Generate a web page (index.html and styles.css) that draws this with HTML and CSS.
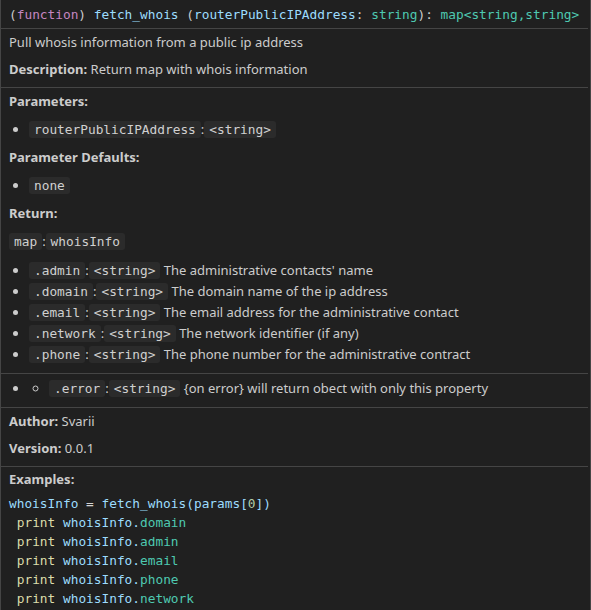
FILE: index.html
```html
<!DOCTYPE html>
<html>
<head>
<meta charset="utf-8">
<link rel="stylesheet" href="styles.css">
</head>
<body>
<div class="hover">
  <div class="content">
    <div class="row header"><span class="p">(</span><span class="kw">function</span><span class="p">)</span> <span class="var">fetch_whois</span> <span class="p">(</span><span class="var">routerPublicIPAddress</span><span class="p">:</span> <span class="type">string</span><span class="p">):</span> <span class="type">map&lt;string,string&gt;</span></div>

    <div class="row">
      <p>Pull whosis information from a public ip address</p>
      <p><strong>Description:</strong> Return map with whois information</p>
    </div>

    <div class="row">
      <p><strong>Parameters:</strong></p>
      <ul>
        <li><code>routerPublicIPAddress</code>:<code>&lt;string&gt;</code></li>
      </ul>
      <p><strong>Parameter Defaults:</strong></p>
      <ul>
        <li><code>none</code></li>
      </ul>
      <p><strong>Return:</strong></p>
      <p class="codeline"><code>map</code>:<code>whoisInfo</code></p>
      <ul>
        <li><code>.admin</code>:<code>&lt;string&gt;</code> The administrative contacts' name</li>
        <li><code>.domain</code>:<code>&lt;string&gt;</code> The domain name of the ip address</li>
        <li><code>.email</code>:<code>&lt;string&gt;</code> The email address for the administrative contact</li>
        <li><code>.network</code>:<code>&lt;string&gt;</code> The network identifier (if any)</li>
        <li><code>.phone</code>:<code>&lt;string&gt;</code> The phone number for the administrative contract</li>
      </ul>
    </div>

    <div class="row">
      <ul>
        <li><ul class="nested"><li><code>.error</code>:<code>&lt;string&gt;</code> {on error} will return obect with only this property</li></ul></li>
      </ul>
    </div>

    <div class="row">
      <p><strong>Author:</strong> Svarii</p>
      <p><strong>Version:</strong> 0.0.1</p>
    </div>

    <div class="row examples">
      <p class="label"><strong>Examples:</strong></p>
<pre class="example"><span class="var">whoisInfo</span> = <span class="var">fetch_whois(params[</span><span class="num">0</span><span class="var">])</span>
 <span class="fn">print</span> <span class="var">whoisInfo.</span><span class="type">domain</span>
 <span class="fn">print</span> <span class="var">whoisInfo.</span><span class="type">admin</span>
 <span class="fn">print</span> <span class="var">whoisInfo.</span><span class="type">email</span>
 <span class="fn">print</span> <span class="var">whoisInfo.</span><span class="type">phone</span>
 <span class="fn">print</span> <span class="var">whoisInfo.</span><span class="type">network</span></pre>
    </div>
  </div>
</div>
</body>
</html>
```
FILE: styles.css
```css
html, body {
  margin: 0;
  padding: 0;
  background: #202020;
}

.hover {
  box-sizing: border-box;
  width: 591px;
  min-height: 610px;
  background: #202020;
  border-left: 1px solid #454545;
  border-right: 1px solid #454545;
  color: #cccccc;
  font-family: "Noto Sans", "Open Sans", sans-serif;
  font-size: 13px;
  line-height: 19px;
}

.content {
  margin-right: 2px;
}

.row {
  padding: 4px 8px 8px 8px;
  border-top: 1px solid #454545;
}

.row:first-child {
  border-top: none;
}

.header {
  padding: 5px 8px 4px 8px;
  font-family: "DejaVu Sans Mono", "Liberation Mono", monospace;
  font-size: 12.8px;
  line-height: 19px;
  white-space: pre;
  color: #cccccc;
}

p {
  margin: 8px 0;
}

.row > :first-child {
  margin-top: 0;
}

.row > :last-child {
  margin-bottom: 0;
}

strong {
  font-weight: 700;
}

ul {
  margin: 8px 0;
  padding-left: 20px;
}

li {
  line-height: 21px;
}

ul.nested {
  margin: 0;
  padding-left: 20px;
  list-style-type: circle;
}

.codeline {
  line-height: 21px;
}

code {
  font-family: "DejaVu Sans Mono", "Liberation Mono", monospace;
  font-size: 12.8px;
  color: #d0d0d0;
  background: #2b2b2b;
  border-radius: 3px;
  padding: 1px 5px;
}

.examples {
  padding-top: 3px;
}

.examples .label {
  margin-bottom: 0;
}

.example {
  margin: 5px 0 0 0;
  font-family: "DejaVu Sans Mono", "Liberation Mono", monospace;
  font-size: 12.8px;
  line-height: 19px;
  color: #d4d4d4;
}

.p { color: #cccccc; }
.kw { color: #c586c0; }
.var { color: #9cdcfe; }
.type { color: #4ec9b0; }
.fn { color: #dcdcaa; }
.num { color: #b5cea8; }
```
